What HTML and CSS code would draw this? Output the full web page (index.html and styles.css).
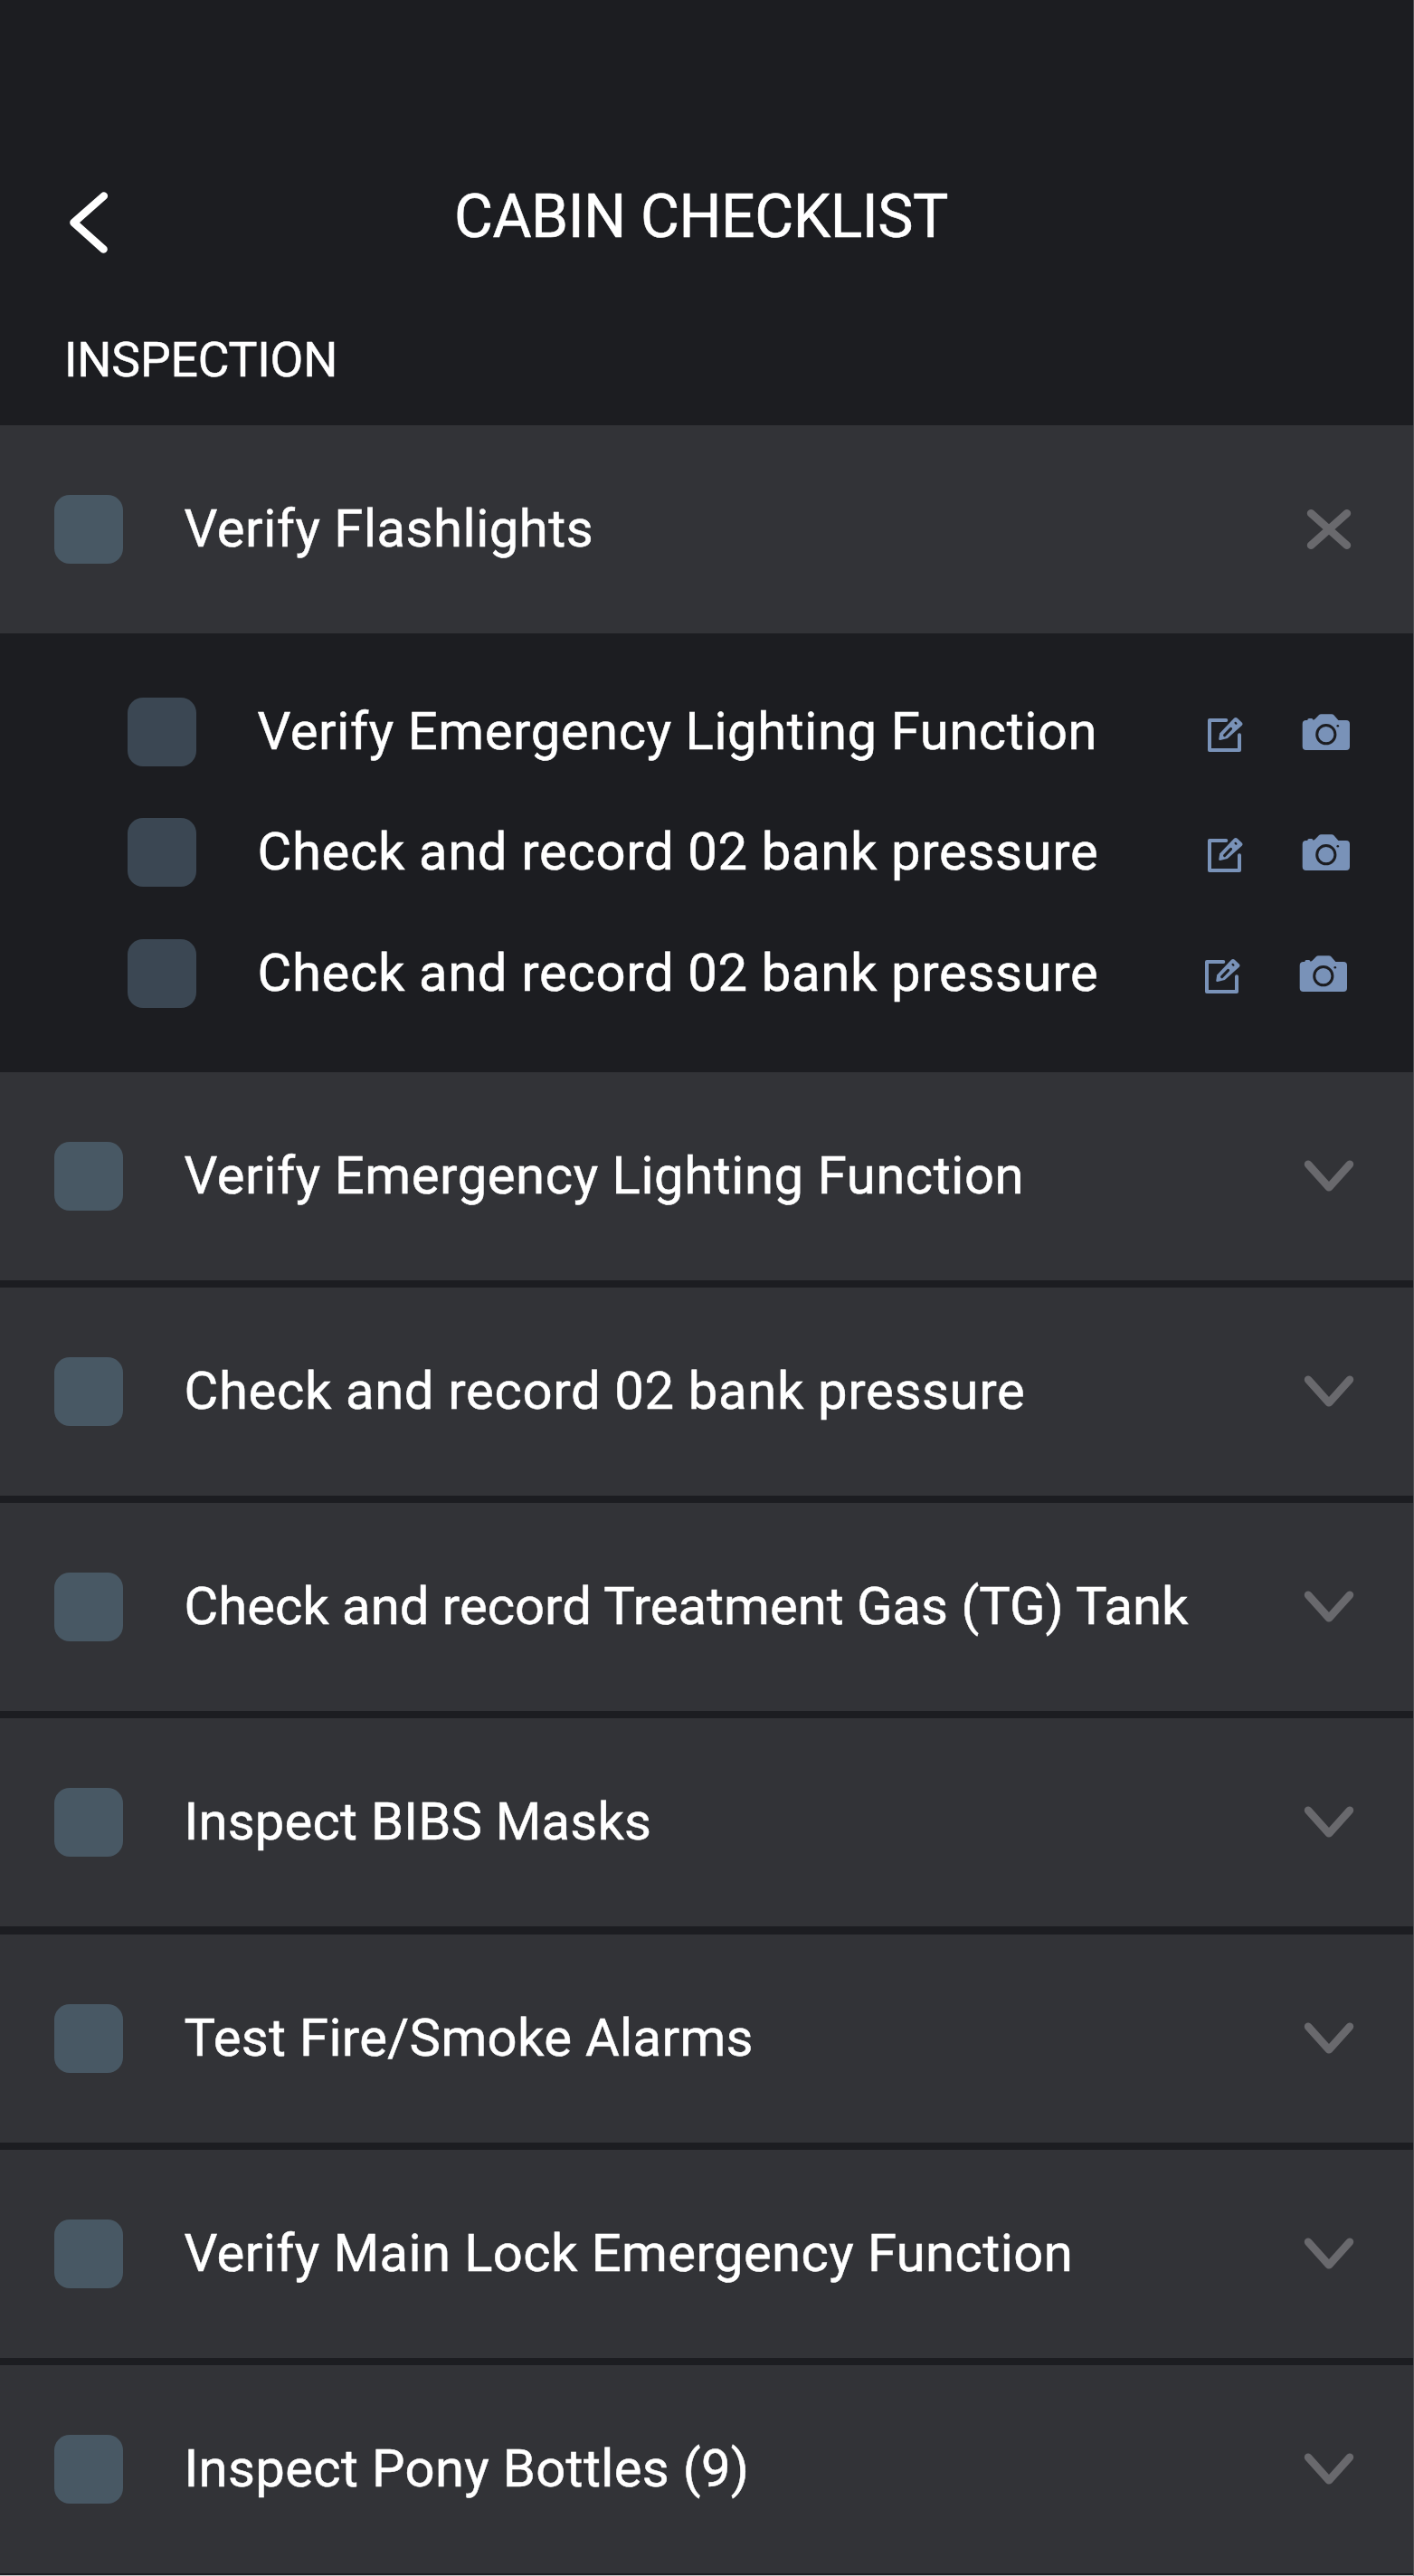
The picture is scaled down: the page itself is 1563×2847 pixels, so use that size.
FILE: index.html
```
<!DOCTYPE html>
<html lang="en">
<head>
<meta charset="utf-8">
<title>Cabin Checklist</title>
<link rel="stylesheet" href="styles.css">
</head>
<body>
<svg class="defs" width="0" height="0" aria-hidden="true">
  <symbol id="chevron" viewBox="0 0 56 46"><path d="M5.1 9.8 28 35.3 50.9 9.8"/></symbol>
  <symbol id="close" viewBox="0 0 56 46"><path d="M8.1 5.3 47.9 40.7M47.9 5.3 8.1 40.7"/></symbol>
  <symbol id="edit" viewBox="0 0 42 44">
    <path d="M22.3 6H4V39H37V22.3" fill="none" stroke="currentColor" stroke-width="4" stroke-linecap="round" stroke-linejoin="round"/>
    <path d="M14.3 26.8 15.2 20.6 30.8 4Q33 2.2 35 4L40 8.8Q41.3 10.4 39.8 11.8L23.8 26 15.8 28Q14.2 28.2 14.3 26.8Z" fill="currentColor"/>
    <path class="cut" d="M20.6 22.6 27.6 15.4" stroke-width="3" stroke-linecap="round"/>
    <path class="cut" d="M32.6 8.9 33.4 9.7" stroke-width="2.2" stroke-linecap="round"/>
  </symbol>
  <symbol id="camera" viewBox="0 0 54 42">
    <path d="M4.7 8H6.2Q6.4 6 8 6H10.8Q12.2 6 12.6 7.7 14.3 7.2 15.5 5.8L18.6 2.4Q19.8 1.2 21.5 1.2H32.8Q34.5 1.2 35.6 2.4L40.4 8H49Q53 8 53 12V37Q53 41 49 41H4.7Q.7 41 .7 37V12Q.7 8 4.7 8Z" fill="currentColor"/>
    <circle class="cut" cx="26.8" cy="23.7" r="10.1" fill="none" stroke-width="3"/>
    <circle class="dot" cx="39.8" cy="14.3" r="1.3"/>
  </symbol>
</svg>
<main class="screen">
  <header class="header">
    <svg class="back" viewBox="0 0 50 76"><path d="M41.8 8.6 8.5 38 41.5 67.5"/></svg>
    <h1 class="title">CABIN CHECKLIST</h1>
  </header>
  <h2 class="section">INSPECTION</h2>
  <div class="row">
    <span class="check"></span><span class="label flash">Verify Flashlights</span>
    <svg class="toggle"><use href="#close"/></svg>
  </div>
  <div class="details">
    <div class="sub">
      <span class="check"></span><span class="label lighting">Verify Emergency Lighting Function</span>
      <svg class="edit"><use href="#edit"/></svg><svg class="camera"><use href="#camera"/></svg>
    </div>
    <div class="sub">
      <span class="check"></span><span class="label bank">Check and record 02 bank pressure</span>
      <svg class="edit"><use href="#edit"/></svg><svg class="camera"><use href="#camera"/></svg>
    </div>
    <div class="sub inset">
      <span class="check"></span><span class="label bank">Check and record 02 bank pressure</span>
      <svg class="edit"><use href="#edit"/></svg><svg class="camera"><use href="#camera"/></svg>
    </div>
  </div>
  <div class="list">
    <div class="row"><span class="check"></span><span class="label lighting">Verify Emergency Lighting Function</span><svg class="toggle"><use href="#chevron"/></svg></div>
    <div class="row"><span class="check"></span><span class="label bank">Check and record 02 bank pressure</span><svg class="toggle"><use href="#chevron"/></svg></div>
    <div class="row"><span class="check"></span><span class="label gas">Check and record Treatment Gas (TG) Tank</span><svg class="toggle"><use href="#chevron"/></svg></div>
    <div class="row"><span class="check"></span><span class="label masks">Inspect BIBS Masks</span><svg class="toggle"><use href="#chevron"/></svg></div>
    <div class="row"><span class="check"></span><span class="label">Test Fire/Smoke Alarms</span><svg class="toggle"><use href="#chevron"/></svg></div>
    <div class="row"><span class="check"></span><span class="label lock">Verify Main Lock Emergency Function</span><svg class="toggle"><use href="#chevron"/></svg></div>
    <div class="row"><span class="check"></span><span class="label">Inspect Pony Bottles (9)</span><svg class="toggle"><use href="#chevron"/></svg></div>
  </div>
</main>
</body>
</html>
```
FILE: styles.css
```
* { box-sizing: border-box; }

body {
  margin: 0;
  background: #1c1d21;
  color: #fff;
  font-family: Roboto, "Liberation Sans", sans-serif;
  -webkit-text-stroke: 0.5px #fff;
}

.defs { display: block; height: 0; }

.screen {
  width: 1563px;
  height: 2847px;
  overflow: hidden;
  border-right: 1px solid #505154;
  border-bottom: 1px solid #c4c4c5;
}

.header {
  display: grid;
  grid-template-columns: 50px 1fr 50px;
  align-items: center;
  height: 284px;
  padding: 204px 85px 0 73px;
}

.back { width: 50px; height: 76px; }

.back path {
  fill: none;
  stroke: #fff;
  stroke-width: 8.6;
  stroke-linecap: round;
  stroke-linejoin: round;
}

.title {
  margin: 0 0 12px;
  text-align: center;
  font-size: 66px;
  line-height: 72px;
  font-weight: 400;
  letter-spacing: -0.43px;
}

.section {
  height: 186px;
  margin: 0;
  padding: 84px 0 0 71px;
  font-size: 53.5px;
  line-height: 60px;
  font-weight: 400;
  letter-spacing: -0.2px;
}

.row {
  display: flex;
  align-items: center;
  height: 230px;
  padding: 0 65px 0 60px;
  background: #323337;
}

.check {
  flex: none;
  width: 76px;
  height: 76px;
  margin-right: 67.5px;
  border-radius: 17px;
  background: #485864;
}

.label {
  flex: 1;
  margin-bottom: 2px;
  white-space: nowrap;
  font-size: 58px;
  line-height: 68px;
  letter-spacing: 0.33px;
}

.flash { letter-spacing: 0.52px; }
.lighting { letter-spacing: 0.57px; }
.bank { letter-spacing: 0.65px; }
.gas { letter-spacing: 0; }
.masks { letter-spacing: 0.2px; }
.lock { letter-spacing: 0.4px; }

.toggle {
  flex: none;
  width: 56px;
  height: 46px;
  fill: none;
  stroke: #69696d;
  stroke-width: 8.6;
  stroke-linecap: round;
  stroke-linejoin: round;
}

.details {
  height: 485px;
  padding-top: 42px;
}

.sub {
  display: flex;
  align-items: center;
  height: 133.5px;
  padding: 0 69px 0 141px;
}

.sub .check { background: #3b4753; }
.inset { padding-right: 72px; }

.edit,
.camera { flex: none; color: #7992b8; }

.edit { width: 42px; height: 44px; margin: 6px 64px 0 0; }
.camera { width: 54px; height: 42px; }

.cut { stroke: #1c1d21; }
.dot { fill: #1c1d21; }

.list {
  display: flex;
  flex-direction: column;
  gap: 8.17px;
}
```
